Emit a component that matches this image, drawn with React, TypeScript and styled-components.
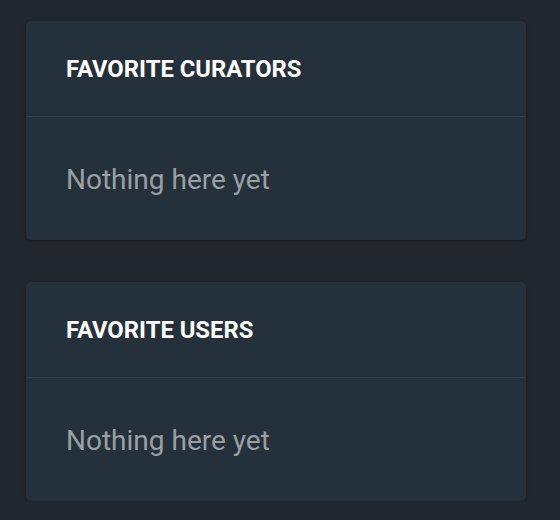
import styled, { createGlobalStyle } from "styled-components";

const GlobalStyle = createGlobalStyle`
  *, *::before, *::after {
    box-sizing: border-box;
  }

  html, body {
    margin: 0;
    padding: 0;
    background: #20272e;
    font-family: Roboto, "Liberation Sans", sans-serif;
  }
`;

const lists = [
  { title: "Favorite curators", items: [] as string[] },
  { title: "Favorite users", items: [] as string[] },
];

const App = () => {
  return (
    <>
      <GlobalStyle />
      <Page>
        {lists.map((list) => (
          <Card key={list.title}>
            <CardHeader>
              <Title>{list.title}</Title>
            </CardHeader>
            <CardBody>
              {list.items.length === 0 && <Empty>Nothing here yet</Empty>}
            </CardBody>
          </Card>
        ))}
      </Page>
    </>
  );
};

const Page = styled.div`
  display: flex;
  flex-direction: column;
  gap: 42px;
  width: 526px;
  padding: 21px 0 0 26px;
`;

const Card = styled.section`
  background: #25313a;
  border-radius: 5px;
  box-shadow: 0 1px 3px rgba(0, 0, 0, 0.35);
`;

const CardHeader = styled.header`
  display: flex;
  align-items: center;
  height: 96px;
  padding: 3px 40px 0;
  border-bottom: 1px solid #334049;
`;

const Title = styled.h2`
  margin: 0;
  font-size: 23.8px;
  line-height: 1;
  font-weight: 700;
  text-transform: uppercase;
  color: #ffffff;
`;

const CardBody = styled.div`
  display: flex;
  align-items: center;
  height: 123px;
  padding: 2px 40px 0;
`;

const Empty = styled.p`
  margin: 0;
  font-size: 28px;
  line-height: 1;
  color: #9a9fa3;
`;

export default App;
